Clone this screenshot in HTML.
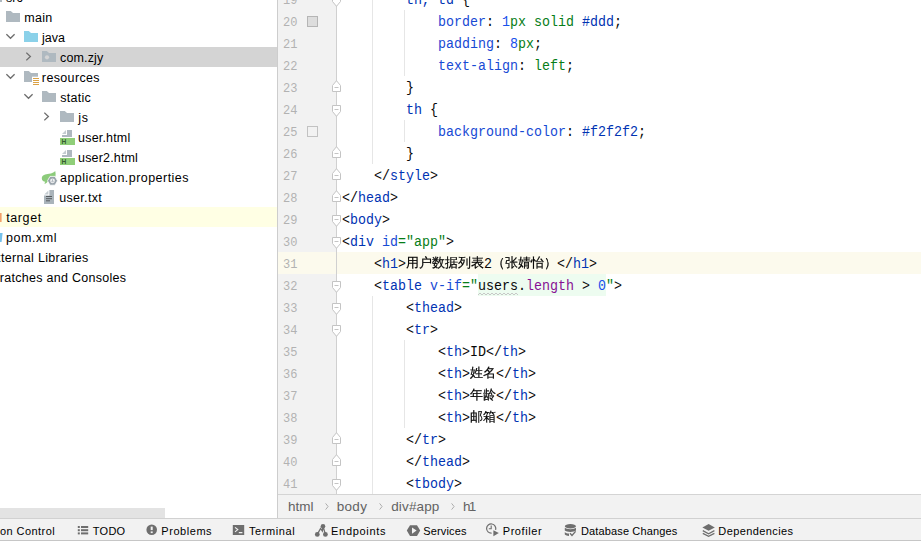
<!DOCTYPE html>
<html><head><meta charset="utf-8">
<style>
html,body{margin:0;padding:0;}
body{width:921px;height:541px;overflow:hidden;background:#fff;position:relative;font-family:"Liberation Sans","Noto Sans CJK SC",sans-serif;}
#tree{position:absolute;left:0;top:0;width:277px;height:519px;background:#fff;overflow:hidden;}
.row{position:absolute;left:0;width:277px;height:20px;line-height:20px;font-size:12.5px;color:#000;white-space:nowrap;}
.row span.t{position:absolute;top:1px;}
.row svg{position:absolute;}
#sep{position:absolute;left:277px;top:0;width:1px;height:518px;background:#cdcdcd;}
#gutter{position:absolute;left:278px;top:0;width:58px;height:494px;background:#f2f2f2;}
#gline{position:absolute;left:336px;top:0;width:1px;height:494px;background:#d0d0d0;}
#editor{position:absolute;left:0;top:0;width:921px;height:494px;overflow:hidden;}
.ln{position:absolute;left:283px;width:20px;height:22px;line-height:26px;font-family:"Liberation Mono",monospace;font-size:12px;letter-spacing:0px;color:#b2b2b2;}
.cl{position:absolute;left:342px;height:22px;line-height:22px;margin-top:2px;font-family:"Liberation Mono","Noto Sans CJK SC",monospace;font-size:13.33px;color:#080808;white-space:pre;transform:scaleY(1.12);transform-origin:0 14px;}
.tg{color:#0033b3}.at{color:#174ad4}.st{color:#067d17}.nm{color:#1750eb}.pr{color:#174ad4}.kw{color:#067d17}.pu{color:#871094}
.cj{position:absolute;height:22px;line-height:22px;margin-top:0px;-webkit-text-stroke:0.2px #000;font-family:"WenQuanYi Zen Hei","Noto Sans CJK SC",sans-serif;font-size:13px;color:#000;white-space:pre;}
.gap{display:inline-block;height:1px;}
#injbg{position:absolute;left:478px;top:274px;width:128px;height:22px;background:#edfcf0}
#wave{position:absolute;left:478px;top:292px;}
.ig{position:absolute;width:1px;background:#e6e6e6;}
.fm{position:absolute;left:332px;}
.sw{position:absolute;left:307px;width:11px;height:11px;box-sizing:border-box;border:1px solid #b5b5b5;}
#hl{position:absolute;left:278px;top:252px;width:643px;height:22px;background:#fcfaed;}
#crumbs{position:absolute;left:278px;top:494px;width:643px;height:24px;background:#f2f2f2;border-top:1px solid #d4d4d4;box-sizing:border-box;font-size:13.5px;color:#626262;line-height:23px;}
#crumbs span{position:absolute;top:0;}
#crumbs svg{position:absolute}
#bar{position:absolute;left:0;top:518px;width:921px;height:23px;background:#f2f2f2;border-top:1px solid #d1d1d1;border-bottom:1px solid #c6c6c6;box-sizing:border-box;font-size:11px;color:#000;line-height:25px;}
#bar span{position:absolute;top:0;white-space:nowrap;}
#bar svg{position:absolute;}
#hscroll{position:absolute;left:0;top:508px;width:165px;height:10px;background:#e3e3e3;}
</style></head><body>
<div id="tree">
<div class="row" style="top:-13px;"><svg width="16" height="16" viewBox="0 0 16 16" style="left:-12px;top:4px"><path d="M0 0.1H4.8L7 2H14V10.9H0Z" fill="#afb9c0"/></svg><span class="t" id="t_src" style="left:6.00px;letter-spacing:0.000px">src</span></div>
<div class="row" style="top:7px;"><svg width="16" height="16" viewBox="0 0 16 16" style="left:6px;top:4px"><path d="M0 0.1H4.8L7 2H14V10.9H0Z" fill="#afb9c0"/></svg><span class="t" id="t_main" style="left:24.18px;letter-spacing:0.326px">main</span></div>
<div class="row" style="top:27px;"><svg width="11" height="7" viewBox="0 0 11 7" style="left:6px;top:6px"><path d="M0.4 1.2L4.5 5.3L8.6 1.2" fill="none" stroke="#6e6e6e" stroke-width="1.3"/></svg><svg width="16" height="16" viewBox="0 0 16 16" style="left:24px;top:4px"><path d="M0 0.1H4.8L7 2H14V10.9H0Z" fill="#8bd1e9"/></svg><span class="t" id="t_java" style="left:42.00px;letter-spacing:0.000px">java</span></div>
<div class="row" style="top:47px;background:#d4d4d4;"><svg width="7" height="11" viewBox="0 0 7 11" style="left:26px;top:4px"><path d="M0.3 1.7L4.4 5.55L0.3 9.4" fill="none" stroke="#6e6e6e" stroke-width="1.3"/></svg><svg width="16" height="16" viewBox="0 0 16 16" style="left:42px;top:4px"><path d="M0 0.1H4.8L7 2H14V10.9H0Z" fill="#afb9c0"/><circle cx="5" cy="6.3" r="2.1" fill="#d4d4d4"/></svg><span class="t" id="t_comzjy" style="left:60.10px;letter-spacing:0.128px">com.zjy</span></div>
<div class="row" style="top:67px;"><svg width="11" height="7" viewBox="0 0 11 7" style="left:6px;top:6px"><path d="M0.4 1.2L4.5 5.3L8.6 1.2" fill="none" stroke="#6e6e6e" stroke-width="1.3"/></svg><svg width="16" height="16" viewBox="0 0 16 16" style="left:24px;top:4px"><path d="M0 0.1H4.8L7 2H14V10.9H0Z" fill="#afb9c0"/><rect x="8" y="5.7" width="8" height="6" fill="#fff"/><rect x="9" y="7" width="6" height="1" fill="#dba246"/><rect x="9" y="9" width="6" height="1" fill="#dba246"/><rect x="9" y="11" width="6" height="1" fill="#dba246"/><rect x="9" y="13" width="6" height="1" fill="#dba246"/></svg><span class="t" id="t_resources" style="left:41.86px;letter-spacing:0.359px">resources</span></div>
<div class="row" style="top:87px;"><svg width="11" height="7" viewBox="0 0 11 7" style="left:24px;top:6px"><path d="M0.4 1.2L4.5 5.3L8.6 1.2" fill="none" stroke="#6e6e6e" stroke-width="1.3"/></svg><svg width="16" height="16" viewBox="0 0 16 16" style="left:42px;top:4px"><path d="M0 0.1H4.8L7 2H14V10.9H0Z" fill="#afb9c0"/></svg><span class="t" id="t_static" style="left:60.34px;letter-spacing:0.238px">static</span></div>
<div class="row" style="top:107px;"><svg width="7" height="11" viewBox="0 0 7 11" style="left:44px;top:4px"><path d="M0.3 1.7L4.4 5.55L0.3 9.4" fill="none" stroke="#6e6e6e" stroke-width="1.3"/></svg><svg width="16" height="16" viewBox="0 0 16 16" style="left:60px;top:4px"><path d="M0 0.1H4.8L7 2H14V10.9H0Z" fill="#afb9c0"/></svg><span class="t" id="t_js" style="left:78.14px;letter-spacing:0.840px">js</span></div>
<div class="row" style="top:127px;"><svg width="16" height="16" viewBox="0 0 16 16" style="left:60px;top:2px"><path d="M7 1H12V8H2V6H7Z" fill="#aeb8bf"/><path d="M6 1V5H2Z" fill="#c4ccd1"/><rect x="0" y="9" width="15" height="7" fill="#8fce78"/><text x="1.6" y="15" font-family="Liberation Sans" font-weight="bold" font-size="6.6" fill="#365a30">H</text></svg><span class="t" id="t_userhtml" style="left:78.10px;letter-spacing:0.175px">user.html</span></div>
<div class="row" style="top:147px;"><svg width="16" height="16" viewBox="0 0 16 16" style="left:60px;top:2px"><path d="M7 1H12V8H2V6H7Z" fill="#aeb8bf"/><path d="M6 1V5H2Z" fill="#c4ccd1"/><rect x="0" y="9" width="15" height="7" fill="#8fce78"/><text x="1.6" y="15" font-family="Liberation Sans" font-weight="bold" font-size="6.6" fill="#365a30">H</text></svg><span class="t" id="t_user2html" style="left:78.10px;letter-spacing:0.156px">user2.html</span></div>
<div class="row" style="top:167px;"><svg width="18" height="18" viewBox="0 0 18 18" style="left:41px;top:2px"><path d="M14.2 2C15 5 14.8 8 13 10L8 11.5C7 12.5 6 13.5 4.2 14.8L3.2 14.2C3.8 13.6 4.2 13.2 4.4 12.8C2.2 12.6 0.8 11.2 0.8 9.2C0.8 6 4.5 5 8 4.7C10.8 4.4 13 3.6 14.2 2Z" fill="#8ccb7b"/><path d="M9 7.4L14 7.4L16.5 11.8L14 16.2L9 16.2L6.5 11.8Z" fill="#98a2aa" stroke="#fff" stroke-width="0.8"/><circle cx="11.5" cy="11.8" r="2.4" fill="#f1f2f3"/><path d="M10.3 11.9A1.3 1.3 0 0 0 12.7 11.9M11.5 10.4V11.9" stroke="#98a2aa" stroke-width="0.8" fill="none"/></svg><span class="t" id="t_applicationproperties" style="left:60.00px;letter-spacing:0.460px">application.properties</span></div>
<div class="row" style="top:187px;"><svg width="16" height="16" viewBox="0 0 16 16" style="left:42px;top:2px"><path d="M7.4 1H12V15H2V6.5H7.4Z" fill="#aab4bb"/><path d="M6.4 1.4V5.5H2.3Z" fill="#c4ccd1"/><rect x="4" y="7" width="6" height="1" fill="#565b5f"/><rect x="4" y="9.2" width="6" height="1" fill="#565b5f"/><rect x="4" y="11.3" width="4" height="1" fill="#565b5f"/></svg><span class="t" id="t_usertxt" style="left:59.30px;letter-spacing:0.300px">user.txt</span></div>
<div class="row" style="top:207px;background:#ffffe4;"><svg width="3" height="9" style="left:0;top:6px"><rect width="1.6" height="9" fill="#f2a06a"/></svg><span class="t" id="t_target" style="left:6.20px;letter-spacing:0.600px">target</span></div>
<div class="row" style="top:227px;"><svg width="3" height="9" style="left:0;top:5.5px"><path d="M0 0H2.6L1.6 9H0Z" fill="#74c0ea"/></svg><span class="t" id="t_pomxml" style="left:6.10px;letter-spacing:0.525px">pom.xml</span></div>
<div class="row" style="top:247px;"><span class="t" id="t_externallibraries" style="left:-14.24px;letter-spacing:0.310px">External Libraries</span></div>
<div class="row" style="top:267px;"><span class="t" id="t_scratchesandconsoles" style="left:-15.32px;letter-spacing:0.280px">Scratches and Consoles</span></div>
</div>
<div id="sep"></div><div id="gutter"></div><div id="hl"></div><div id="gline"></div>
<div id="editor">
<div id="injbg"></div>
<svg id="wave" width="40" height="4" viewBox="0 0 40 4"><path d="M0 3L2 1L4 3L6 1L8 3L10 1L12 3L14 1L16 3L18 1L20 3L22 1L24 3L26 1L28 3L30 1L32 3L34 1L36 3L38 1L40 3" fill="none" stroke="#c3c3c3" stroke-width="0.9"/></svg>
<div class="ln" style="top:-12px">19</div>
<div class="cl" style="top:-12px">        <span class="tg">th, td</span> {</div>
<div class="ln" style="top:10px">20</div>
<div class="cl" style="top:10px">            <span class="pr">border</span>: <span class="nm">1</span><span class="kw">px</span> <span class="kw">solid</span> <span class="tg">#ddd</span>;</div>
<div class="ln" style="top:32px">21</div>
<div class="cl" style="top:32px">            <span class="pr">padding</span>: <span class="nm">8</span><span class="kw">px</span>;</div>
<div class="ln" style="top:54px">22</div>
<div class="cl" style="top:54px">            <span class="pr">text-align</span>: <span class="kw">left</span>;</div>
<div class="ln" style="top:76px">23</div>
<div class="cl" style="top:76px">        }</div>
<div class="ln" style="top:98px">24</div>
<div class="cl" style="top:98px">        <span class="tg">th</span> {</div>
<div class="ln" style="top:120px">25</div>
<div class="cl" style="top:120px">            <span class="pr">background-color</span>: <span class="tg">#f2f2f2</span>;</div>
<div class="ln" style="top:142px">26</div>
<div class="cl" style="top:142px">        }</div>
<div class="ln" style="top:164px">27</div>
<div class="cl" style="top:164px">    &lt;/<span class="tg">style</span>&gt;</div>
<div class="ln" style="top:186px">28</div>
<div class="cl" style="top:186px">&lt;/<span class="tg">head</span>&gt;</div>
<div class="ln" style="top:208px">29</div>
<div class="cl" style="top:208px">&lt;<span class="tg">body</span>&gt;</div>
<div class="ln" style="top:230px">30</div>
<div class="cl" style="top:230px">&lt;<span class="tg">div</span> <span class="at">id</span><span class="st">=&quot;app&quot;</span>&gt;</div>
<div class="ln" style="top:252px">31</div>
<div class="cl" style="top:252px">    &lt;<span class="tg">h1</span>&gt;<span class="gap" style="width:78px"></span>2<span class="gap" style="width:65px"></span>&lt;/<span class="tg">h1</span>&gt;</div>
<div class="ln" style="top:274px">32</div>
<div class="cl" style="top:274px">    &lt;<span class="tg">table</span> <span class="at">v-if</span><span class="st">=&quot;</span><span class="inj"><span class="wv">users</span>.<span class="pu">length</span> &gt; <span class="nm">0</span></span><span class="st">&quot;</span>&gt;</div>
<div class="ln" style="top:296px">33</div>
<div class="cl" style="top:296px">        &lt;<span class="tg">thead</span>&gt;</div>
<div class="ln" style="top:318px">34</div>
<div class="cl" style="top:318px">        &lt;<span class="tg">tr</span>&gt;</div>
<div class="ln" style="top:340px">35</div>
<div class="cl" style="top:340px">            &lt;<span class="tg">th</span>&gt;ID&lt;/<span class="tg">th</span>&gt;</div>
<div class="ln" style="top:362px">36</div>
<div class="cl" style="top:362px">            &lt;<span class="tg">th</span>&gt;<span class="gap" style="width:26px"></span>&lt;/<span class="tg">th</span>&gt;</div>
<div class="ln" style="top:384px">37</div>
<div class="cl" style="top:384px">            &lt;<span class="tg">th</span>&gt;<span class="gap" style="width:26px"></span>&lt;/<span class="tg">th</span>&gt;</div>
<div class="ln" style="top:406px">38</div>
<div class="cl" style="top:406px">            &lt;<span class="tg">th</span>&gt;<span class="gap" style="width:26px"></span>&lt;/<span class="tg">th</span>&gt;</div>
<div class="ln" style="top:428px">39</div>
<div class="cl" style="top:428px">        &lt;/<span class="tg">tr</span>&gt;</div>
<div class="ln" style="top:450px">40</div>
<div class="cl" style="top:450px">        &lt;/<span class="tg">thead</span>&gt;</div>
<div class="ln" style="top:472px">41</div>
<div class="cl" style="top:472px">        &lt;<span class="tg">tbody</span>&gt;</div>
<div class="cj" style="left:406px;top:252px">用户数据列表</div>
<div class="cj" style="left:492px;top:252px">（张婧怡）</div>
<div class="cj" style="left:470px;top:362px">姓名</div>
<div class="cj" style="left:470px;top:384px">年龄</div>
<div class="cj" style="left:470px;top:406px">邮箱</div>
<div class="ig" style="left:372px;top:0px;height:164px"></div>
<div class="ig" style="left:404px;top:10px;height:66px"></div>
<div class="ig" style="left:404px;top:120px;height:22px"></div>
<div class="ig" style="left:372px;top:296px;height:198px"></div>
<div class="ig" style="left:404px;top:340px;height:88px"></div>
<svg class="fm" style="top:-5px" width="9" height="12" viewBox="0 0 9 12"><path d="M0.5 0.5H8.5V6.5L4.5 11.3L0.5 6.5Z" fill="#fff" stroke="#c4c4c4"/><path d="M2.5 4.5H6.5" stroke="#c4c4c4"/></svg>
<svg class="fm" style="top:80px" width="9" height="12" viewBox="0 0 9 12"><path d="M0.5 11.5H8.5V5.5L4.5 0.7L0.5 5.5Z" fill="#fff" stroke="#c4c4c4"/><path d="M2.5 7.5H6.5" stroke="#c4c4c4"/></svg>
<svg class="fm" style="top:105px" width="9" height="12" viewBox="0 0 9 12"><path d="M0.5 0.5H8.5V6.5L4.5 11.3L0.5 6.5Z" fill="#fff" stroke="#c4c4c4"/><path d="M2.5 4.5H6.5" stroke="#c4c4c4"/></svg>
<svg class="fm" style="top:146px" width="9" height="12" viewBox="0 0 9 12"><path d="M0.5 11.5H8.5V5.5L4.5 0.7L0.5 5.5Z" fill="#fff" stroke="#c4c4c4"/><path d="M2.5 7.5H6.5" stroke="#c4c4c4"/></svg>
<svg class="fm" style="top:168px" width="9" height="12" viewBox="0 0 9 12"><path d="M0.5 11.5H8.5V5.5L4.5 0.7L0.5 5.5Z" fill="#fff" stroke="#c4c4c4"/><path d="M2.5 7.5H6.5" stroke="#c4c4c4"/></svg>
<svg class="fm" style="top:190px" width="9" height="12" viewBox="0 0 9 12"><path d="M0.5 11.5H8.5V5.5L4.5 0.7L0.5 5.5Z" fill="#fff" stroke="#c4c4c4"/><path d="M2.5 7.5H6.5" stroke="#c4c4c4"/></svg>
<svg class="fm" style="top:215px" width="9" height="12" viewBox="0 0 9 12"><path d="M0.5 0.5H8.5V6.5L4.5 11.3L0.5 6.5Z" fill="#fff" stroke="#c4c4c4"/><path d="M2.5 4.5H6.5" stroke="#c4c4c4"/></svg>
<svg class="fm" style="top:237px" width="9" height="12" viewBox="0 0 9 12"><path d="M0.5 0.5H8.5V6.5L4.5 11.3L0.5 6.5Z" fill="#fff" stroke="#c4c4c4"/><path d="M2.5 4.5H6.5" stroke="#c4c4c4"/></svg>
<svg class="fm" style="top:281px" width="9" height="12" viewBox="0 0 9 12"><path d="M0.5 0.5H8.5V6.5L4.5 11.3L0.5 6.5Z" fill="#fff" stroke="#c4c4c4"/><path d="M2.5 4.5H6.5" stroke="#c4c4c4"/></svg>
<svg class="fm" style="top:303px" width="9" height="12" viewBox="0 0 9 12"><path d="M0.5 0.5H8.5V6.5L4.5 11.3L0.5 6.5Z" fill="#fff" stroke="#c4c4c4"/><path d="M2.5 4.5H6.5" stroke="#c4c4c4"/></svg>
<svg class="fm" style="top:325px" width="9" height="12" viewBox="0 0 9 12"><path d="M0.5 0.5H8.5V6.5L4.5 11.3L0.5 6.5Z" fill="#fff" stroke="#c4c4c4"/><path d="M2.5 4.5H6.5" stroke="#c4c4c4"/></svg>
<svg class="fm" style="top:432px" width="9" height="12" viewBox="0 0 9 12"><path d="M0.5 11.5H8.5V5.5L4.5 0.7L0.5 5.5Z" fill="#fff" stroke="#c4c4c4"/><path d="M2.5 7.5H6.5" stroke="#c4c4c4"/></svg>
<svg class="fm" style="top:454px" width="9" height="12" viewBox="0 0 9 12"><path d="M0.5 11.5H8.5V5.5L4.5 0.7L0.5 5.5Z" fill="#fff" stroke="#c4c4c4"/><path d="M2.5 7.5H6.5" stroke="#c4c4c4"/></svg>
<svg class="fm" style="top:479px" width="9" height="12" viewBox="0 0 9 12"><path d="M0.5 0.5H8.5V6.5L4.5 11.3L0.5 6.5Z" fill="#fff" stroke="#c4c4c4"/><path d="M2.5 4.5H6.5" stroke="#c4c4c4"/></svg>
<div class="sw" style="top:16px;background:#ddd;border-color:#b5b5b5"></div>
<div class="sw" style="top:126px;background:#f2f2f2;border-color:#c2c2c2"></div>
</div>
<div id="crumbs"><span class="" id="c_html" style="left:10.00px;letter-spacing:0.000px">html</span><svg width="5" height="8" viewBox="0 0 5 8" style="left:46.75px;top:8px"><path d="M0.6 0.4L3.1 3.5L0.6 6.6" fill="none" stroke="#adadad" stroke-width="1"/></svg><span class="" id="c_body" style="left:58.72px;letter-spacing:0.303px">body</span><svg width="5" height="8" viewBox="0 0 5 8" style="left:100.5px;top:8px"><path d="M0.6 0.4L3.1 3.5L0.6 6.6" fill="none" stroke="#adadad" stroke-width="1"/></svg><span class="" id="c_divapp" style="left:113.24px;letter-spacing:0.128px">div#app</span><svg width="5" height="8" viewBox="0 0 5 8" style="left:172.5px;top:8px"><path d="M0.6 0.4L3.1 3.5L0.6 6.6" fill="none" stroke="#adadad" stroke-width="1"/></svg><span class="" id="c_h1" style="left:184.92px;letter-spacing:-1.540px">h1</span></div>
<div id="hscroll"></div>
<div id="bar"><svg width="921" height="21" viewBox="0 519 921 21" style="left:0;top:0">
<g fill="#6e6e6e">
<rect x="77.8" y="526" width="2" height="2"/><rect x="81" y="526" width="7.2" height="2"/>
<rect x="77.8" y="529.2" width="2" height="2"/><rect x="81" y="529.2" width="7.2" height="2"/>
<rect x="77.8" y="532.4" width="2" height="2"/><rect x="81" y="532.4" width="7.2" height="2"/>
<circle cx="151.7" cy="529.8" r="5.3"/>
<rect x="232.8" y="525" width="11.4" height="10"/>
<circle cx="323" cy="526.3" r="2.3"/><circle cx="317.3" cy="534.4" r="2.4"/><circle cx="325.4" cy="534.4" r="2.4"/>
<path d="M406.8 530.6L410 525.3H417L420.2 530.6L417 536H410Z"/>
<path d="M493.4 530.2L498.8 533.1L493.4 536.2Z"/>
<ellipse cx="570.4" cy="526.2" rx="5.6" ry="2.2"/>
<path d="M564.8 527.8C566.5 529.6 574.3 529.6 576 527.8V530.6C574.3 532.4 566.5 532.4 564.8 530.6Z"/>
<path d="M564.8 532C565.6 533 567.5 533.5 569 533.6V536C567.3 536 565.6 535.4 564.8 534.6Z"/>
<path d="M708.6 524L714.8 527.4L708.6 530.8L702.4 527.4Z"/>
</g>
<g fill="#f2f2f2">
<rect x="150.7" y="526.6" width="2" height="3.5"/><rect x="150.7" y="531.4" width="2" height="1.7"/>
<path d="M412 527.6L416.6 530.6L412 533.7Z"/>
</g>
<g fill="none" stroke="#f2f2f2" stroke-width="1.1"><path d="M235 527.3L237.8 529.6L235 531.9M238.8 532.6H242.4"/></g>
<g fill="none" stroke="#6e6e6e">
<path d="M317.3 534.4L320.6 528.4L322.3 531L323 526.3L325.4 534.4" stroke-width="1.3"/>
<path d="M495.6 529.8A4.6 4.6 0 1 0 491.6 533.1" stroke-width="1.2"/>
<path d="M491.2 525.6V528.8H488.8" stroke-width="1.1"/>
<path d="M570 533.2L572 535.4L575.6 531.4" stroke-width="1.4"/>
<path d="M702.8 530.6L708.6 533.7L714.4 530.6M702.8 533.4L708.6 536.4L714.4 533.4" stroke-width="1.2"/>
</g>
</svg><span class="" id="b_versioncontrol" style="left:-26.80px;letter-spacing:0.450px">Version Control</span><span class="" id="b_todo" style="left:92.84px;letter-spacing:0.257px">TODO</span><span class="" id="b_problems" style="left:161.36px;letter-spacing:0.540px">Problems</span><span class="" id="b_terminal" style="left:248.92px;letter-spacing:0.595px">Terminal</span><span class="" id="b_endpoints" style="left:331.12px;letter-spacing:0.674px">Endpoints</span><span class="" id="b_services" style="left:423.24px;letter-spacing:0.140px">Services</span><span class="" id="b_profiler" style="left:502.72px;letter-spacing:0.570px">Profiler</span><span class="" id="b_databasechanges" style="left:581.00px;letter-spacing:0.131px">Database Changes</span><span class="" id="b_dependencies" style="left:718.36px;letter-spacing:0.389px">Dependencies</span></div>
</body></html>
